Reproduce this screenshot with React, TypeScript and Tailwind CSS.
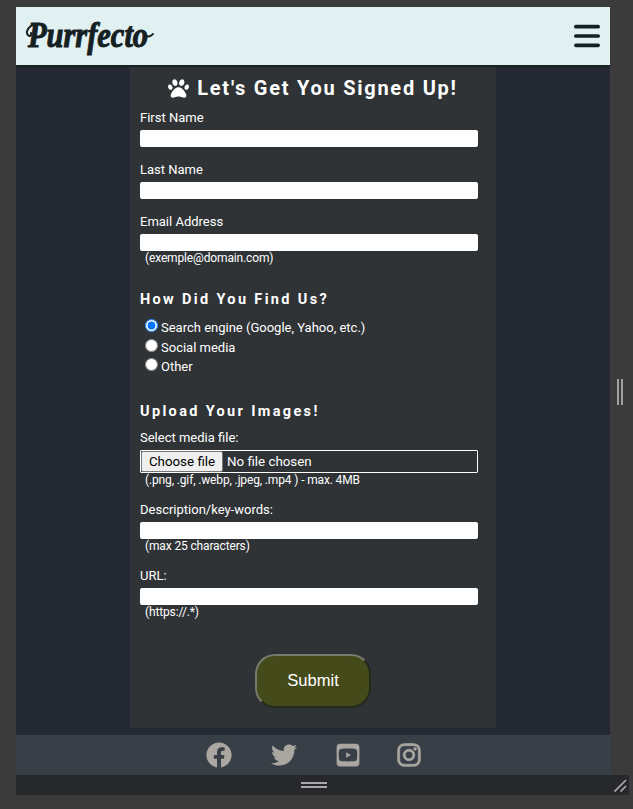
import React from "react";
import { FaBars, FaPaw, FaTwitter, FaInstagram, FaSquareYoutube } from "react-icons/fa6";
import { FaFacebook } from "react-icons/fa";

function Field({ label, hint }: { label: string; hint?: string }) {
  return (
    <div className={hint ? "h-[66px]" : "h-[52px]"}>
      <label className="block h-[20px] text-[13px] leading-[16px]">{label}</label>
      <input className="block h-[17px] w-[338px] rounded-[2px] bg-white px-1 text-xs text-black outline-none" />
      {hint && <Hint>{hint}</Hint>}
    </div>
  );
}

function Hint({ children }: { children: React.ReactNode }) {
  return <p className="pl-[5px] text-[12px] leading-[14px] tracking-[-0.14px]">{children}</p>;
}

function Choice({ label, checked = false }: { label: string; checked?: boolean }) {
  return (
    <label className="flex h-[19.5px] items-start pl-[5px] text-[13px] leading-[19px]">
      <input type="radio" name="source" defaultChecked={checked} className="mt-[1px] mr-[3px] h-[13px] w-[13px]" />
      {label}
    </label>
  );
}

function Logo() {
  return (
    <svg className="overflow-visible" width="150" height="56" role="img" aria-label="Purrfecto" fill="currentColor" stroke="currentColor" fontFamily="Liberation Serif, serif" fontWeight="700" fontStyle="italic">
      <text transform="translate(2 39) scale(0.87 1)" fontSize="35" strokeWidth="1">Purrfecto</text>
      <path d="M9 17C3 17-1 24 2 27c2 2 4 0 3-2" fill="none" strokeWidth="2" strokeLinecap="round" />
      <path d="M119 27c3 3 6 1 8-1" fill="none" strokeWidth="1.8" strokeLinecap="round" />
    </svg>
  );
}

export default function App() {
  return (
    <div className="flex h-[809px] w-[633px] flex-col overflow-hidden bg-[#3b3b3b] pt-[7px] font-[Roboto,sans-serif] text-white">
      <div className="flex">
        <div className="ml-4 flex h-[768px] w-[594px] flex-col bg-[#232832]">
          <header className="flex h-[60px] shrink-0 items-center justify-between border-b-2 border-[#1a2225] bg-[#e1f1f2] pr-[10px] pl-[10px] text-[#152023]">
            <Logo />
            <FaBars className="h-[30px] w-[26px]" />
          </header>
          <main className="ml-[114px] h-[661px] w-[366px] shrink-0 bg-[#2f3336] pl-[10px]">
            <h1 className="flex h-[42px] w-[346px] items-center justify-center gap-[8px] text-[20px] font-bold tracking-[1.75px]">
              <FaPaw className="h-[21px] w-[21px]" />
              Let's Get You Signed Up!
            </h1>
            <div className="mt-px">
              <Field label="First Name" />
              <Field label="Last Name" />
              <Field label="Email Address" hint="(exemple@domain.com)" />
            </div>
            <h2 className="mt-[10px] h-[28px] text-[14.5px] leading-[20px] font-bold tracking-[2.35px]">How Did You Find Us?</h2>
            <Choice label="Search engine (Google, Yahoo, etc.)" checked />
            <Choice label="Social media" />
            <Choice label="Other" />
            <h2 className="mt-[25.5px] h-[28px] text-[14.5px] leading-[20px] font-bold tracking-[2.35px]">Upload Your Images!</h2>
            <label className="block h-[20px] text-[13px] leading-[16px]">Select media file:</label>
            <div className="flex h-[23px] w-[338px] items-center rounded-[1px] border border-white text-[13.33px]">
              <button className="h-[21px] w-[82px] rounded-[2px] border border-[#767676] bg-[#efefef] text-black">Choose file</button>
              <span className="ml-[4px]">No file chosen</span>
            </div>
            <div className="h-[29px]"><Hint>(.png, .gif, .webp, .jpeg, .mp4 ) - max. 4MB</Hint></div>
            <Field label="Description/key-words:" hint="(max 25 characters)" />
            <Field label="URL:" hint="(https://.*)" />
            <button className="mt-[20px] ml-[115px] h-[54px] w-[116px] rounded-[20px] border-2 border-t-[#777b6d] border-r-[#252a1c] border-b-[#252a1c] border-l-[#777b6d] bg-[#444a19] font-['Liberation_Sans',sans-serif] text-[16.6px]">Submit</button>
          </main>
          <footer className="mt-[7px] flex h-[40px] shrink-0 items-center bg-[#393f47] pl-[190px] text-[#aaa7a1]">
            <FaFacebook className="h-[26px] w-[26px]" />
            <FaTwitter className="ml-[39px] h-[26px] w-[26px]" />
            <FaSquareYoutube className="ml-[38px] h-[26px] w-[26px]" />
            <FaInstagram className="ml-[35px] h-[26px] w-[26px] stroke-current stroke-[14]" />
          </footer>
        </div>
        <div className="flex h-[770px] w-[20px] items-center justify-center gap-[2px]">
          <i className="h-[26px] w-[2px] bg-[#a0a0a1]" />
          <i className="h-[26px] w-[2px] bg-[#a0a0a1]" />
        </div>
      </div>
      <div className="mt-[-2px] ml-4 flex h-[20px] w-[613px] shrink-0 items-center bg-[#26282c]">
        <div className="ml-[285px] flex w-[26px] flex-col gap-[2px]">
          <i className="h-[2px] bg-[#a9a9ad]" />
          <i className="h-[2px] bg-[#a9a9ad]" />
        </div>
        <svg className="ml-[287px]" width="13" height="13" viewBox="0 0 13 13" fill="none" stroke="#aaaaac" strokeWidth="1.7">
          <path d="M0.5 12.5 12 1M6.5 12.5 12 7" />
        </svg>
      </div>
    </div>
  );
}
